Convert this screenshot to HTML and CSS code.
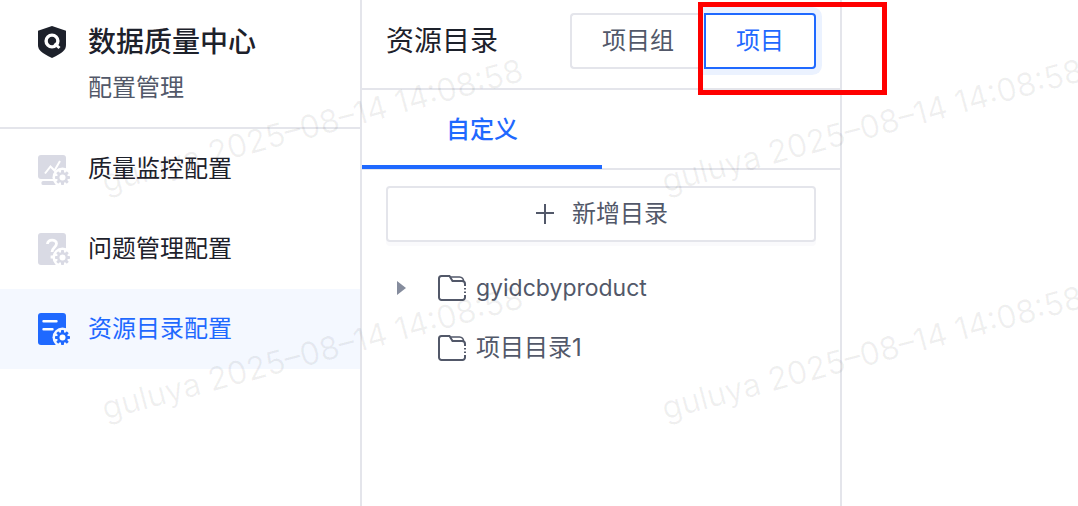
FILE: index.html
```
<!DOCTYPE html>
<html lang="zh-CN">
<head>
    <meta charset="UTF-8">
    <meta name="viewport" content="width=device-width, initial-scale=1.0">
    <title>数据质量中心 - 资源目录配置</title>
    <link rel="stylesheet" href="styles.css">
</head>
<body>
    <!-- gear shared by the menu icons -->
    <svg class="defs" aria-hidden="true">
        <symbol id="gear" viewBox="0 0 16 16">
            <g fill="currentColor">
                <rect x="6.4" y="0" width="3.2" height="16" rx="0.8"/>
                <rect x="6.4" y="0" width="3.2" height="16" rx="0.8" transform="rotate(45 8 8)"/>
                <rect x="6.4" y="0" width="3.2" height="16" rx="0.8" transform="rotate(90 8 8)"/>
                <rect x="6.4" y="0" width="3.2" height="16" rx="0.8" transform="rotate(135 8 8)"/>
                <circle cx="8" cy="8" r="5.8"/>
            </g>
            <circle class="cut" cx="8" cy="8" r="3.2"/>
        </symbol>
        <symbol id="folder" viewBox="0 0 30 28">
            <path d="M28 12V10a3 3 0 0 0-3-3H15.5L12.500 2H4.500A2.500 2.500 0 0 0 2 4.500v19A2.500 2.500 0 0 0 4.500 26h21a2.500 2.500 0 0 0 2.500-2.500V21" fill="none" stroke="currentColor" stroke-width="2"/>
            <path d="M13 3h9.500a4 4 0 0 1 4 4.500" fill="none" stroke="currentColor" stroke-width="1.500"/>
            <path d="M28 14v1.500M28 17.500v1.500" fill="none" stroke="currentColor" stroke-width="2"/>
        </symbol>
    </svg>

    <div class="layout">
        <aside class="sidebar">
            <header class="brand">
                <svg class="brand-icon" viewBox="0 0 28 32" aria-hidden="true">
                    <path d="M14 0 28 4.800V19c0 5-3.500 8-14 13C3.500 27 0 24 0 19V4.800z" fill="#1d212b"/>
                    <circle cx="14" cy="15" r="5.900" fill="none" stroke="#fff" stroke-width="3.400"/>
                    <path d="M16.500 17.500 21.500 22" stroke="#fff" stroke-width="3"/>
                </svg>
                <div>
                    <h1>数据质量中心</h1>
                    <p>配置管理</p>
                </div>
            </header>
            <nav class="menu">
                <a class="menu-item" href="#monitor">
                    <svg class="menu-icon" viewBox="0 0 32 32" aria-hidden="true">
                        <rect x="0" y="2" width="28" height="24" rx="3" fill="currentColor"/>
                        <rect x="3.500" y="28" width="18" height="4" rx="1.500" fill="currentColor"/>
                        <path d="M7 20.500l5.500-7 4 4L22 8" fill="none" stroke="#fff" stroke-width="2"/>
                        <circle class="cut" cx="24.500" cy="24.500" r="10"/>
                        <use href="#gear" x="17" y="17" width="15" height="15"/>
                    </svg>
                    质量监控配置
                </a>
                <a class="menu-item" href="#issue">
                    <svg class="menu-icon" viewBox="0 0 32 32" aria-hidden="true">
                        <rect x="0" y="0" width="28" height="32" rx="3" fill="currentColor"/>
                        <path d="M9.500 11c0-5 9-5 9-.5 0 4-4.500 4-4.500 8.500M14 22.500v3" fill="none" stroke="#fff" stroke-width="2.800"/>
                        <circle class="cut" cx="24.500" cy="24.500" r="10"/>
                        <use href="#gear" x="17" y="17" width="15" height="15"/>
                    </svg>
                    问题管理配置
                </a>
                <a class="menu-item active" href="#catalog" aria-current="page">
                    <svg class="menu-icon" viewBox="0 0 32 32" aria-hidden="true">
                        <rect x="0" y="0" width="28" height="32" rx="3" fill="currentColor"/>
                        <path d="M5.500 8.200h13M5.500 16.200h9" stroke="#fff" stroke-width="2.400" stroke-linecap="round"/>
                        <circle class="cut" cx="24.500" cy="24.500" r="10"/>
                        <use href="#gear" x="17" y="17" width="15" height="15"/>
                    </svg>
                    资源目录配置
                </a>
            </nav>
        </aside>

        <main class="panel">
            <header class="panel-header">
                <h2>资源目录</h2>
                <div class="switch">
                    <button type="button" class="switch-btn">项目组</button>
                    <button type="button" class="switch-btn selected">项目</button>
                    <span class="highlight"></span>
                </div>
            </header>
            <div class="tabs" role="tablist">
                <button type="button" class="tab" role="tab" aria-selected="true">自定义</button>
            </div>
            <button type="button" class="add-btn">
                <svg width="20" height="20" viewBox="0 0 20 20" aria-hidden="true">
                    <path d="M11 0v20M2 9h18" stroke="currentColor" stroke-width="2"/>
                </svg>
                新增目录
            </button>
            <ul class="tree">
                <li>
                    <svg class="arrow" viewBox="0 0 10 14" aria-hidden="true"><path d="M0 0 9 7 0 14z" fill="#858c9d"/></svg>
                    <svg class="folder" aria-hidden="true"><use href="#folder"/></svg>
                    <span class="latin">gyidcbyproduct</span>
                </li>
                <li>
                    <span class="arrow"></span>
                    <svg class="folder" aria-hidden="true"><use href="#folder"/></svg>
                    <span>项目目录1</span>
                </li>
            </ul>
        </main>
    </div>

    <div class="watermark" aria-hidden="true">
        <span>guluya 2025–08–14 14:08:58</span>
        <span>guluya 2025–08–14 14:08:58</span>
        <span>guluya 2025–08–14 14:08:58</span>
        <span>guluya 2025–08–14 14:08:58</span>
    </div>
</body>
</html>
```

FILE: styles.css
```
* {
    box-sizing: border-box;
}
body {
    margin: 0;
    font-family: Inter, "Noto Sans CJK SC", sans-serif;
    font-size: 24px;
    line-height: 36px;
    color: #1d212b;
    background: #fff;
    position: relative;
    overflow: hidden;
}
h1, h2, p, ul {
    margin: 0;
    padding: 0;
}
button {
    font: inherit;
    color: inherit;
    cursor: pointer;
}
.defs {
    display: none;
}
.cut {
    fill: #fff;
}
.layout {
    display: flex;
    min-height: 100vh;
}

/* sidebar */
.sidebar {
    flex: 0 0 362px;
    border-right: 2px solid #e4e5eb;
}
.brand {
    display: flex;
    align-items: flex-start;
    gap: 22px;
    padding: 20px 24px 21px 38px;
    border-bottom: 2px solid #e4e5eb;
}
.brand-icon {
    width: 28px;
    height: 32px;
    margin-top: 6px;
}
.brand h1 {
    font-size: 28px;
    line-height: 44px;
    font-weight: 500;
}
.brand p {
    padding-top: 6px;
    color: #525869;
}
.menu-item {
    display: flex;
    align-items: center;
    gap: 18px;
    height: 80px;
    padding: 0 24px 0 38px;
    color: inherit;
    text-decoration: none;
}
.menu-icon {
    width: 32px;
    height: 32px;
    color: #d9dae4;
}
.menu-item.active,
.menu-item.active .menu-icon {
    color: #1f69ff;
}
.menu-item.active {
    background: #f4f8ff;
}
.menu-item.active .cut {
    fill: #f4f8ff;
}

/* catalog panel */
.panel {
    flex: 0 0 480px;
    border-right: 2px solid #e4e5eb;
}
.panel-header {
    display: flex;
    align-items: center;
    justify-content: space-between;
    height: 90px;
    padding: 0 24px 6px;
    border-bottom: 2px solid #e4e5eb;
}
.panel-header h2 {
    font-size: 28px;
    line-height: 44px;
    font-weight: 400;
}
.switch {
    display: flex;
    position: relative;
}
.switch-btn {
    height: 56px;
    padding: 0 30px;
    border: 2px solid #e4e5eb;
    border-right: 0;
    border-radius: 4px 0 0 4px;
    background: #fff;
    color: #525869;
}
.switch-btn.selected {
    border: 2px solid #1f69ff;
    border-radius: 0 4px 4px 0;
    color: #1f69ff;
    box-shadow: 0 0 0 6px #ebf2ff;
}
.highlight {
    position: absolute;
    top: -11px;
    right: -71px;
    width: 189px;
    height: 93px;
    border: 5px solid #f00;
    pointer-events: none;
}
.tabs {
    display: flex;
    height: 80px;
    border-bottom: 2px solid #e4e5eb;
}
.tab {
    flex: 0 0 240px;
    height: 79px;
    padding: 4px 0 0;
    border: 0;
    border-bottom: 4px solid #1f69ff;
    background: none;
    color: #1f69ff;
    font-weight: 500;
}
.add-btn {
    display: flex;
    align-items: center;
    justify-content: center;
    gap: 18px;
    width: calc(100% - 48px);
    height: 56px;
    margin: 16px 24px;
    border: 2px solid #e4e5eb;
    border-radius: 4px;
    background: #fff;
    color: #525869;
    box-shadow: 0 4px 0 #fafafc;
}
.tree {
    list-style: none;
    padding: 0 24px;
    color: #525869;
}
.tree li {
    display: flex;
    align-items: center;
    height: 60px;
}
.latin {
    font-size: 23px;
}
.arrow {
    width: 10px;
    height: 14px;
    margin: 0 30px 0 11px;
}
.folder {
    width: 30px;
    height: 28px;
    margin-right: 9px;
}

/* watermark tiles over the whole page */
.watermark {
    position: absolute;
    inset: 0;
    display: grid;
    grid-template-columns: repeat(2, 560px);
    grid-auto-rows: 227px;
    padding: 12px 0 0 32px;
    overflow: hidden;
    pointer-events: none;
    font-size: 32px;
    color: rgba(0, 0, 0, 0.06);
}
.watermark span {
    place-self: center;
    white-space: nowrap;
    transform: rotate(-15deg);
}
```
